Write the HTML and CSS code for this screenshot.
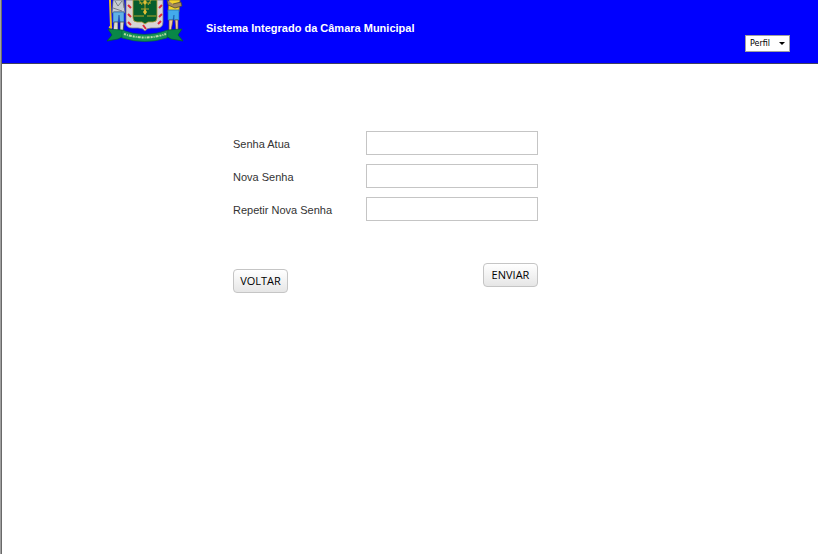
FILE: index.html
```
<!DOCTYPE html>
<html lang="pt-BR">
<head>
<meta charset="utf-8">
<title>Sistema Integrado da Câmara Municipal</title>
<link rel="stylesheet" href="styles.css">
</head>
<body>
<header class="banner">
  <svg class="crest" width="78" height="42" viewBox="0 0 78 42" aria-hidden="true">
    <!-- left guardian -->
    <path d="M4 0L5 27M3 27L6 28" stroke="#e8bd27" stroke-width="2" fill="none"/>
    <path d="M7 0H18L19 13H6Z" fill="#c5cbd3" stroke="#4b535c" stroke-width=".7"/>
    <path d="M9 1L12 6L16 1M7 8L16 11M17 1L18 8M8 12H18" stroke="#636b75" stroke-width=".8" fill="none"/>
    <path d="M7 12H18V23H14L13 15L12 23H7Z" fill="#62b2e5" stroke="#2861a6" stroke-width=".7"/>
    <path d="M8 22H12V32H7ZM14 22H18L17 32H14Z" fill="#d8d9d2" stroke="#343b40" stroke-width=".7"/>
    <!-- right guardian -->
    <path d="M63 0H74L73 12H62Z" fill="#f3d32b" stroke="#8e721d" stroke-width=".7"/>
    <path d="M61 0L62 5L69 8L76 6L75 2L67 4" fill="#a4885d" stroke="#3e3d31" stroke-width=".7"/>
    <path d="M62 10H73V20H68V15L67 20H62Z" fill="#43abec" stroke="#216fae" stroke-width=".7"/>
    <path d="M63 20H67L65 31H63ZM69 20H72V31H70Z" fill="#edc9a0" stroke="#705039" stroke-width=".7"/>
    <!-- shield -->
    <path d="M20 0H57V22Q57 28 51 28H45Q41 28 39 31Q37 28 32 28H26Q20 28 20 22Z" fill="#d8d4d5" stroke="#777b82" stroke-width=".8"/>
    <path d="M27 0H51V18Q51 22 47 22H42L39 24L36 22H31Q27 22 27 18Z" fill="#075d2d" stroke="#b99e35" stroke-width=".8"/>
    <path d="M39 0V14M33 3H45M35 9H43M33 0L36 5M45 0L42 5M28 16H38M41 16H50" stroke="#b5a52b" fill="none"/>
    <path d="M37 2L39 0L41 2L39 5ZM37 12L39 9L41 12L39 15Z" fill="#e0bf35"/>
    <path d="M22 5L25 8M22 14L25 17M22 22L25 25M37 25L40 29M52 24L55 21M53 17L56 14M53 8L56 5" stroke="#dc293b" stroke-width="2"/>
    <!-- ribbon -->
    <path d="M2 29L16 30L20 35L12 39L1 41L6 35ZM76 29L62 30L58 35L65 39L77 41L72 35Z" fill="#098747" stroke="#04582e" stroke-width=".7"/>
    <path d="M16 30Q38 39 62 30L61 38Q39 45 16 38Z" fill="#159353" stroke="#07643a" stroke-width=".7"/>
    <path d="M18 34Q39 41 60 34" stroke="#b9d9a6" stroke-width="2" stroke-dasharray="2 1 1 1 3 1" fill="none"/>
  </svg>
  <h1 class="title">Sistema Integrado da Câmara Municipal</h1>
  <div class="profile">
    <select class="profile-select" aria-label="Perfil"><option>Perfil</option></select>
  </div>
</header>
<main class="content">
  <form class="password-form">
    <div class="row">
      <label class="label" for="current">Senha Atua</label>
      <input class="field" id="current" type="password">
    </div>
    <div class="row">
      <label class="label" for="new">Nova Senha</label>
      <input class="field" id="new" type="password">
    </div>
    <div class="row">
      <label class="label" for="repeat">Repetir Nova Senha</label>
      <input class="field" id="repeat" type="password">
    </div>
    <div class="actions">
      <button class="button" type="button">VOLTAR</button>
      <button class="button button-send" type="submit">ENVIAR</button>
    </div>
  </form>
</main>
</body>
</html>
```
FILE: styles.css
```
* {
  box-sizing: border-box;
}

html {
  min-height: 100%;
  background: #fff;
  border-left: 1px solid #a0a0a0;
}

body {
  min-height: 100vh;
  margin: 0;
  border-left: 1px solid #696969;
  font: 11px/16px "Liberation Sans", sans-serif;
  color: #333;
}

.banner {
  display: flex;
  align-items: flex-start;
  height: 64px;
  padding: 0 28px 0 104px;
  background: #00f;
  border-bottom: 1px solid #404060;
}

.crest {
  flex: none;
}

.title {
  margin: 20px 0 0 22px;
  font-size: 11px;
  line-height: 16px;
  color: #fff;
}

.profile {
  position: relative;
  margin: 35px 0 0 auto;
}

.profile::after {
  content: "";
  position: absolute;
  top: 7px;
  right: 5px;
  border: 3px solid transparent;
  border-top-color: #000;
  border-bottom: 0;
  pointer-events: none;
}

.profile-select {
  display: block;
  width: 45px;
  height: 17px;
  padding: 0 0 0 4px;
  appearance: none;
  background: #fff;
  border: 1px solid #a0a0a0;
  border-radius: 0;
  font: 8px/15px "DejaVu Sans", sans-serif;
  color: #000;
}

.content {
  padding: 67px 28px 0 231px;
}

.password-form {
  max-width: 305px;
}

.row {
  display: flex;
  align-items: center;
  justify-content: space-between;
  height: 24px;
  margin-bottom: 9px;
}

.label {
  padding-top: 2px;
  white-space: nowrap;
}

.field {
  width: 172px;
  height: 24px;
  padding: 2px 4px;
  background: #fff;
  border: 1px solid #c5c5c5;
  font: inherit;
}

.actions {
  display: flex;
  align-items: flex-end;
  justify-content: space-between;
  height: 30px;
  margin-top: 42px;
}

.button {
  width: 55px;
  height: 24px;
  padding: 0;
  background: linear-gradient(#fff, #e6e6e6);
  border: 1px solid #c5c5c5;
  border-radius: 4px;
  font: 11px/20px "Open Sans", sans-serif;
  color: #000;
}

.button-send {
  align-self: flex-start;
}
```
